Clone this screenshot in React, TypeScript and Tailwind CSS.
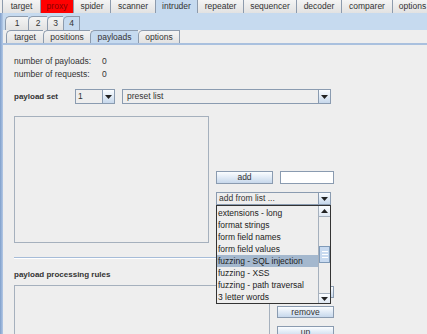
import clsx from "clsx";

const TOP_TABS = [
  { label: "target", w: "w-[38px]" },
  { label: "proxy", w: "w-[33px]", red: true },
  { label: "spider", w: "w-[37px]" },
  { label: "scanner", w: "w-[45px]" },
  { label: "intruder", w: "w-[42px]", active: true },
  { label: "repeater", w: "w-[46px]" },
  { label: "sequencer", w: "w-[53px]" },
  { label: "decoder", w: "w-[45px]" },
  { label: "comparer", w: "w-[51px]" },
  { label: "options", w: "w-[40px]" },
];

const NUM_TABS = [
  { label: "1", w: "w-[23px]" },
  { label: "2", w: "w-[19px]" },
  { label: "3", w: "w-[16px]" },
  { label: "4", w: "w-[17px]", active: true },
];

const SUB_TABS = [
  { label: "target", w: "w-[37px]" },
  { label: "positions", w: "w-[47px]" },
  { label: "payloads", w: "w-[48px]", active: true },
  { label: "options", w: "w-[42px]" },
];

const LIST_ITEMS = [
  "extensions - long",
  "format strings",
  "form field names",
  "form field values",
  "fuzzing - SQL injection",
  "fuzzing - XSS",
  "fuzzing - path traversal",
  "3 letter words",
];

function Arrow({ up }: { up?: boolean }) {
  return (
    <svg width="7" height="4" viewBox="0 0 7 4" className={clsx(up && "rotate-180")}>
      <path d="M0 0h7L3.5 4z" fill="#222" />
    </svg>
  );
}

function Tab({
  label,
  w,
  active,
  red,
  h,
  cut,
}: {
  label: string;
  w: string;
  active?: boolean;
  red?: boolean;
  h: string;
  cut?: boolean;
}) {
  return (
    <div
      className={clsx(
        "flex shrink-0 items-center justify-center border-l border-[#8d9bad]",
        !cut && "rounded-tl-[5px] border-t",
        w,
        h,
        active
          ? "bg-[#c6daef]"
          : red
            ? "bg-[#ff0000] text-[#8a0000]"
            : "bg-gradient-to-b from-[#f4f4f4] to-[#e2e2e2]"
      )}
    >
      {label}
    </div>
  );
}

function Button({ label, className }: { label: string; className?: string }) {
  return (
    <div
      className={clsx(
        "flex h-[12px] w-[57px] items-center justify-center border border-[#8a9bb0] bg-gradient-to-b from-[#fbfdff] to-[#c7d8ec] text-[8.5px] leading-none",
        className
      )}
    >
      {label}
    </div>
  );
}

function Combo({ label, className }: { label: string; className: string }) {
  return (
    <div className={clsx("flex items-stretch border border-[#8a9bb0] bg-[#eeeeee]", className)}>
      <div className="flex flex-1 items-center pl-[2px] leading-none">{label}</div>
      <div className="flex w-[12px] items-center justify-center border-l border-[#8a9bb0] bg-gradient-to-b from-[#fbfdff] to-[#c7d8ec]">
        <Arrow />
      </div>
    </div>
  );
}

export default function App() {
  return (
    <div className="h-[334px] w-[427px] overflow-hidden bg-[#eeeeee] font-['Liberation_Sans',Arial,sans-serif] text-[8.5px] text-[#333]">
      <div className="flex h-[13px] pl-[2px]">
        {TOP_TABS.map((t) => (
          <Tab key={t.label} {...t} h="h-[13px]" cut />
        ))}
      </div>

      <div className="flex h-[321px]">
        <div className="w-[3px] shrink-0 bg-gradient-to-r from-[#7f9fcb] to-[#b5cae6]" />
        <div className="flex min-w-0 flex-1 flex-col">
          <div className="flex h-[18px] bg-[#c6daef] pt-[3px] pl-[2px]">
            {NUM_TABS.map((t, i) => (
              <Tab
                key={t.label}
                {...t}
                h="h-[14px]"
                w={clsx(t.w, i === NUM_TABS.length - 1 && "border-r")}
              />
            ))}
          </div>
          <div className="flex h-[17px] items-end border-b-2 border-[#a9c0de] pl-[3px]">
            {SUB_TABS.map((t, i) => (
              <Tab
                key={t.label}
                {...t}
                h="h-[13px]"
                w={clsx(t.w, i === SUB_TABS.length - 1 && "border-r")}
              />
            ))}
          </div>

          <div className="flex flex-col pt-[11px] pl-[11px]">
            <div className="grid grid-cols-[88px_auto] gap-y-[2px] leading-[11px]">
              <span>number of payloads:</span>
              <span>0</span>
              <span>number of requests:</span>
              <span>0</span>
            </div>

            <div className="mt-[9px] flex h-[15px] items-center">
              <span className="w-[61px] text-[8px] font-bold">payload set</span>
              <Combo label="1" className="h-[15px] w-[40px]" />
              <Combo label="preset list" className="ml-[7px] h-[15px] w-[209px] [&>div:first-child]:pl-[4px]" />
            </div>

            <div className="mt-[12px] flex items-start">
              <div className="h-[127px] w-[195px] border border-[#a5b0bd]" />
              <div className="mt-[55px] ml-[7px] flex flex-col gap-[8px]">
                <div className="flex gap-[7px]">
                  <Button label="add" className="h-[13px] w-[54px]" />
                  <div className="h-[13px] w-[54px] border border-[#8a9bb0] bg-white" />
                </div>
                <div className="relative z-10">
                  <Combo label="add from list ..." className="h-[13px] w-[115px]" />
                  <div className="absolute top-full left-0 flex h-[99px] w-[115px] border border-[#333]">
                    <div className="flex flex-1 flex-col bg-[#eeeeee] pt-[1px] leading-[12px] text-[#222]">
                      {LIST_ITEMS.map((item) => (
                        <div
                          key={item}
                          className={clsx(
                            "h-[12px] pl-[1px]",
                            item === "fuzzing - SQL injection" && "bg-[#a4b8ce]"
                          )}
                        >
                          {item}
                        </div>
                      ))}
                    </div>
                    <div className="flex w-[12px] flex-col border-l border-[#a5b0bd] bg-[#eeeeee]">
                      <div className="flex h-[11px] items-center justify-center border-b border-[#a5b0bd] bg-gradient-to-b from-[#fbfdff] to-[#dfe8f3]">
                        <Arrow up />
                      </div>
                      <div className="flex flex-1 flex-col">
                        <div className="h-[29px]" />
                        <div className="flex h-[17px] flex-col items-center justify-center gap-[2px] border border-[#7f9ab8] bg-[#c8daf0]">
                          <div className="h-px w-[6px] bg-white" />
                          <div className="h-px w-[6px] bg-white" />
                          <div className="h-px w-[6px] bg-white" />
                        </div>
                      </div>
                      <div className="flex h-[10px] items-center justify-center border-t border-[#a5b0bd] bg-gradient-to-b from-[#fbfdff] to-[#dfe8f3]">
                        <Arrow />
                      </div>
                    </div>
                  </div>
                </div>
              </div>
            </div>

            <div className="mt-[14px] h-[2px] w-[305px] border-t border-[#a6bcd8] border-b border-b-white" />

            <div className="mt-[10px] text-[8px] leading-[11px] font-bold">payload processing rules</div>

            <div className="mt-[5px] flex items-start">
              <div className="h-[60px] w-[256px] border border-[#a5b0bd]" />
              <div className="mt-px ml-[7px] flex flex-col gap-[8px]">
                <Button label="" />
                <Button label="remove" />
                <Button label="up" />
              </div>
            </div>
          </div>
        </div>
      </div>
    </div>
  );
}
